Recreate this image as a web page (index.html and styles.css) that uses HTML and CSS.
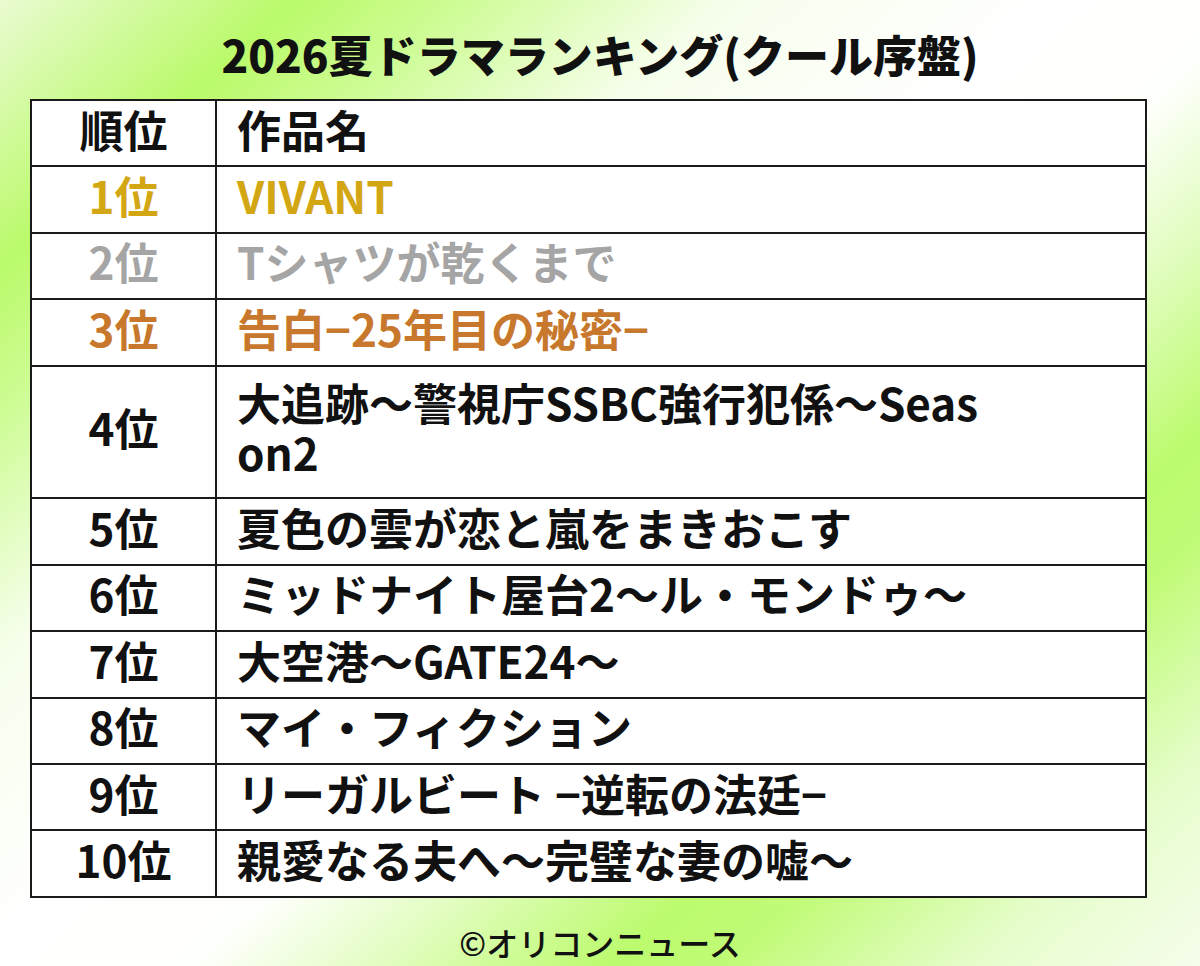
FILE: index.html
```html
<!DOCTYPE html>
<html lang="ja">
<head>
<meta charset="utf-8">
<title>2026夏ドラマランキング(クール序盤)</title>
<link rel="stylesheet" href="styles.css">
</head>
<body>
<div class="page">
  <h1 class="title">2026夏ドラマランキング(クール序盤)</h1>
  <div class="table">
    <div class="row head">
      <div class="cell rank">順位</div>
      <div class="cell name">作品名</div>
    </div>
    <div class="row gold">
      <div class="cell rank">1位</div>
      <div class="cell name">VIVANT</div>
    </div>
    <div class="row silver">
      <div class="cell rank">2位</div>
      <div class="cell name">Tシャツが乾くまで</div>
    </div>
    <div class="row bronze">
      <div class="cell rank">3位</div>
      <div class="cell name">告白−25年目の秘密−</div>
    </div>
    <div class="row tall">
      <div class="cell rank">4位</div>
      <div class="cell name">大追跡～警視庁SSBC強行犯係～Seas<br>on2</div>
    </div>
    <div class="row">
      <div class="cell rank">5位</div>
      <div class="cell name">夏色の雲が恋と嵐をまきおこす</div>
    </div>
    <div class="row">
      <div class="cell rank">6位</div>
      <div class="cell name">ミッドナイト屋台2～ル・モンドゥ～</div>
    </div>
    <div class="row">
      <div class="cell rank">7位</div>
      <div class="cell name">大空港～GATE24～</div>
    </div>
    <div class="row">
      <div class="cell rank">8位</div>
      <div class="cell name">マイ・フィクション</div>
    </div>
    <div class="row">
      <div class="cell rank">9位</div>
      <div class="cell name">リーガルビート −逆転の法廷−</div>
    </div>
    <div class="row">
      <div class="cell rank">10位</div>
      <div class="cell name">親愛なる夫へ～完璧な妻の嘘～</div>
    </div>
  </div>
  <p class="credit">©オリコンニュース</p>
</div>
</body>
</html>
```

FILE: styles.css
```css
html, body {
  margin: 0;
  padding: 0;
}

body {
  width: 1200px;
  height: 966px;
  overflow: hidden;
  font-family: "Noto Sans CJK JP", "Noto Sans", sans-serif;
  color: #111;
  background: linear-gradient(138deg,
    #eafbd2 0%,
    #bafa6a 13%,
    #cdfc93 20%,
    #f6feeb 32%,
    #ffffff 46%,
    #fdfffa 56%,
    #e2fdc0 64%,
    #bcfb6e 74%,
    #c0fb76 79%,
    #e6fdcb 90%,
    #f6fdec 100%);
}

.page {
  display: flex;
  flex-direction: column;
}

.title {
  margin: 0;
  height: 99px;
  box-sizing: border-box;
  padding-top: 8px;
  display: flex;
  align-items: center;
  justify-content: center;
  font-size: 44px;
  font-weight: 900;
  line-height: 1;
  color: #111;
}

.table {
  margin-left: 30px;
  width: 1117px;
  box-sizing: border-box;
  padding: 2px;
  gap: 2px;
  display: flex;
  flex-direction: column;
  background: #1a1a1a;
}

.row {
  display: grid;
  grid-template-columns: 183px 1fr;
  gap: 2px;
  height: 64.4px;
}

.row.tall {
  height: 130.8px;
}

.cell {
  background: #fff;
  display: flex;
  align-items: center;
  box-sizing: border-box;
  padding-bottom: 9px;
  font-size: 44px;
  font-weight: 700;
  line-height: 50px;
  white-space: nowrap;
}

.cell.rank {
  justify-content: center;
}

.cell.name {
  padding-left: 20px;
}

.gold .cell {
  color: #d3a614;
}

.silver .cell {
  color: #a5a5a5;
}

.bronze .cell {
  color: #c8782c;
}

.credit {
  margin: 0;
  height: 68px;
  box-sizing: border-box;
  padding-top: 20px;
  display: flex;
  align-items: center;
  justify-content: center;
  font-size: 32px;
  font-weight: 500;
  line-height: 1;
  color: #111;
}
```
